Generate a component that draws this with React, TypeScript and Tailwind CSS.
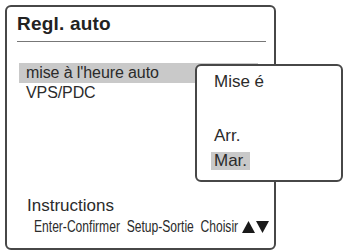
import React from 'react';

const sans = "font-['Liberation_Sans','Arial',sans-serif]";

function Arrows() {
  return (
    <span className="inline-flex items-center gap-[1px] ml-[2px]">
      <svg width="13" height="12" viewBox="0 0 13 12">
        <path d="M6.5 0 L13 12 L0 12 Z" fill="#1a1a1a" />
      </svg>
      <svg width="13" height="12" viewBox="0 0 13 12">
        <path d="M0 0 L13 0 L6.5 12 Z" fill="#1a1a1a" />
      </svg>
    </span>
  );
}

export default function App() {
  return (
    <div className={`relative w-[345px] h-[251px] bg-white text-[#2b2b2b] ${sans}`}>
      <div className="ml-[5px] pt-[5px]">
        <div className="w-[271px] h-[245px] border-2 border-[#474747] rounded-[6px] flex flex-col">
          <div className="pl-[10px] pt-[5px] text-[19px] leading-[24px] font-bold tracking-[0.2px] text-[#222]">Regl. auto</div>
          <div className="ml-[10px] mr-[8px] mt-[5px] h-px bg-[#777]" />

          <div className="mt-[21px] ml-[12px] mr-[16px] text-[16px] tracking-[-0.1px]">
            <div className="h-[20px] leading-[20px] pl-[7px] bg-[#c9c9c9] whitespace-nowrap">mise à l'heure auto</div>
            <div className="h-[20px] leading-[20px] pl-[7px]">VPS/PDC</div>
          </div>

          <div className="flex-1" />

          <div className="pl-[20px] text-[17px] leading-[20px]">Instructions</div>
          <div className="mt-[2px] mb-[12px] pl-[27px] flex items-center text-[16px] leading-[18px] whitespace-nowrap">
            <div className="w-[206px]">
              <span className="inline-block origin-left scale-x-[0.755]">Enter-Confirmer&nbsp; Setup-Sortie&nbsp; Choisir</span>
            </div>
            <Arrows />
          </div>
        </div>
      </div>

      {/* sous-menu par-dessus */}
      <div className="absolute left-[195px] top-[64px] w-[148px] h-[118px] border-2 border-[#474747] rounded-[6px] bg-white text-[17px]">
        <div className="pt-[6px] pl-[17px] leading-[20px]">Mise é</div>
        <div className="mt-[34px] pl-[17px] leading-[20px]">Arr.</div>
        <div className="mt-[6px] ml-[14px] w-fit px-[3px] leading-[18px] bg-[#c9c9c9]">Mar.</div>
      </div>
    </div>
  );
}
